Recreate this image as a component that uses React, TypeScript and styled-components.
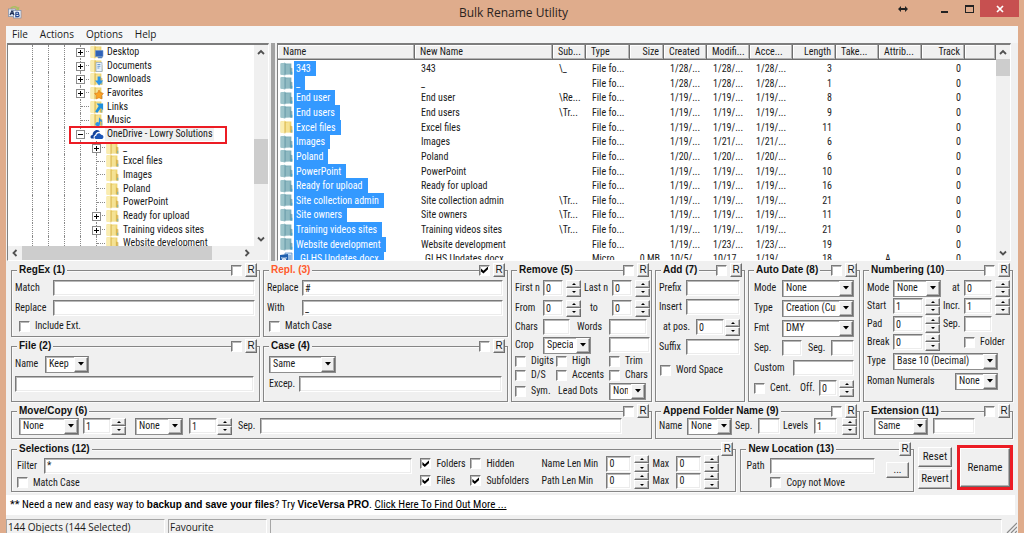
import React from "react";
import styled, { createGlobalStyle, css } from "styled-components";

const uiFont = `"Roboto Condensed", "Liberation Sans", Arial, sans-serif`;
const titleFont = `"Liberation Sans", Arial, sans-serif`;
const chromeFont = `"Open Sans", "Noto Sans", sans-serif`;
const face = "#f0f0f0";
const dark = "#808080";

const Global = createGlobalStyle`
  * { box-sizing: border-box; }
  body { margin: 0; background: #dfac8c; overflow: hidden; }
  button, input, select { font: inherit; color: inherit; margin: 0; border-radius: 0; outline: none; }
`;

const Desktop = styled.div`
  min-height: 100vh;
  display: flex;
  flex-direction: column;
  background: #dfac8c;
  font: 10px/14px ${uiFont};
  color: #1a1a1a;
  white-space: nowrap;
`;

/* ---------- title bar and menu ---------- */

const TitleBar = styled.header`
  height: 26px;
  display: grid;
  grid-template-columns: 1fr auto 1fr;
  padding: 0 5px 0 8px;
`;
const AppMark = styled.div`
  padding-top: 5px;
`;
const Title = styled.h1`
  margin: 0;
  font: 12px/25px ${chromeFont};
  color: #2b2320;
`;
const Caption = styled.div`
  display: flex;
  justify-content: flex-end;
  height: 17px;
`;
const CaptionButton = styled.button<{ $w: number; $close?: boolean }>`
  width: ${(p) => p.$w}px;
  padding: 0;
  border: 0;
  display: flex;
  align-items: center;
  justify-content: center;
  background: ${(p) => (p.$close ? "#c75050" : "transparent")};
`;

const Window = styled.main`
  flex: 1;
  margin: 0 6px;
  display: flex;
  flex-direction: column;
  background: ${face};
`;
const MenuBar = styled.nav`
  height: 17px;
  display: flex;
  gap: 12px;
  padding-left: 6px;
  background: #f5f6f7;
  font: 10px/17px ${chromeFont};
`;
const MenuItem = styled.button`
  border: 0;
  padding: 0;
  background: none;
`;

/* ---------- upper panes ---------- */

const Panes = styled.div`
  flex: 1 0 218px;
  height: 218px;
  display: flex;
  padding-right: 7px;
`;
const Pane = styled.section`
  display: flex;
  flex-direction: column;
  overflow: hidden;
  background: #fff;
  border: 1px solid #fff;
  border-top: 2px solid #7d7d7d;
  border-left-color: ${dark};
`;
const TreePane = styled(Pane)`
  width: 262px;
  flex: none;
  margin-left: 1px;
`;
const ListPane = styled(Pane)`
  flex: 1;
  min-width: 0;
  flex-direction: row;
`;
const Splitter = styled.div`
  width: 8px;
  flex: none;
  background: linear-gradient(90deg, ${face} 2px, #a2a2a2 2px, #a2a2a2 6px, ${face} 6px);
`;
const PaneRow = styled.div`
  flex: 1;
  min-height: 0;
  display: flex;
`;
const TreeView = styled.ul`
  flex: 1;
  height: 205px;
  margin: 0;
  padding: 0 0 0 24px;
  list-style: none;
  display: grid;
  grid-template-rows: repeat(15, 1fr);
`;
const TreeClip = styled.div`
  flex: 1;
  overflow: hidden;
  display: flex;
  align-items: flex-start;
`;
const TreeItem = styled.li`
  display: flex;
  min-height: 0;
`;
const Guide = styled.span`
  width: 16px;
  border-left: 1px dotted #8a8a8a;
`;
const Branch = styled.span`
  width: 10px;
  border-left: 1px dotted #8a8a8a;
  position: relative;
  display: flex;
  align-items: center;
  &::before {
    content: "";
    flex: 1;
    margin-right: 1px;
    border-top: 1px dotted #8a8a8a;
  }
`;
const Toggle = styled.button`
  position: absolute;
  left: -5px;
  top: 3px;
  width: 9px;
  height: 9px;
  padding: 0;
  border: 1px solid #8c8c8c;
  background: #fff;
  display: flex;
`;
const NodeLabel = styled.span<{ $on?: boolean }>`
  margin-left: 1px;
  padding: 0 2px;
  line-height: 14px;
  background: ${(p) => (p.$on ? "#f0f0f0" : "none")};
`;
const IconSlot = styled.span`
  width: 14px;
  display: flex;
  align-items: center;
`;
const CalloutHost = styled.span`
  display: flex;
  position: relative;
`;
const Callout = styled.span`
  position: absolute;
  z-index: 2;
  left: -11px;
  right: -13px;
  top: -1px;
  height: 18px;
  border: 2px solid #ec1c24;
  pointer-events: none;
`;

const VBar = styled.div`
  width: 14px;
  flex: none;
  background: ${face};
  display: flex;
  flex-direction: column;
`;
const HBar = styled.div`
  height: 14px;
  flex: none;
  background: ${face};
  display: flex;
`;
const ArrowButton = styled.button`
  width: 14px;
  height: 14px;
  flex: none;
  border: 0;
  padding: 0;
  background: none;
  display: flex;
  align-items: center;
  justify-content: center;
`;
const Track = styled.div<{ $n: number }>`
  flex: ${(p) => p.$n} 1 0;
`;
const Thumb = styled(Track)`
  background: #cdcdcd;
`;

const FileTable = styled.table`
  flex: 1;
  min-width: 0;
  display: flex;
  flex-direction: column;
  overflow: hidden;
  border-spacing: 0;
`;
const columns = css`
  display: grid;
  grid-template-columns: 137px 138px 33px 44px 34px repeat(7, 43px) minmax(0, 1fr);
`;
const HeadRow = styled.tr`
  ${columns}
  height: 15px;
  background: ${face};
  border-bottom: 1px solid #6e6e6e;
`;
const HeadCell = styled.th<{ $right?: boolean }>`
  padding: 0 4px 0 5px;
  font-weight: normal;
  line-height: 14px;
  text-align: ${(p) => (p.$right ? "right" : "left")};
  border-right: 1px solid #6e6e6e;
  box-shadow: inset -1px -1px 0 #b4b4b4, inset 1px 1px 0 #fff;
  overflow: hidden;
`;
const FileBody = styled.tbody`
  flex: none;
  margin-top: 1px;
  height: 205px;
  display: grid;
  grid-template-rows: repeat(14, 1fr);
`;
const FileRow = styled.tr`
  ${columns}
  min-height: 0;
`;
const FileCell = styled.td<{ $right?: boolean }>`
  padding: 0 4px 0 6px;
  line-height: 15px;
  text-align: ${(p) => (p.$right ? "right" : "left")};
  overflow: hidden;
`;
const NameCell = styled.td`
  padding: 0 0 0 2px;
  display: flex;
`;
const NameTag = styled.span`
  padding: 0 5px 0 2px;
  line-height: 15px;
  background: #3399ff;
  color: #fff;
`;

/* ---------- option groups ---------- */

const Options = styled.form`
  padding: 3px 5px;
`;
const GroupGrid = styled.div`
  display: grid;
  grid-template-columns:
    minmax(0, 249fr) minmax(0, 245fr) minmax(0, 141fr)
    minmax(0, 90fr) minmax(0, 112fr) minmax(0, 150fr);
  grid-template-rows: 73px 62px 34px;
  gap: 3px;
`;
const BottomRow = styled.div`
  display: flex;
  gap: 4px;
  margin-top: 4px;
  height: 49px;
`;
/* The rendered legend shifts a fieldset's padding box down by its own height,
   so the frame and the corner buttons are lifted back over the title line. */
const Group = styled.fieldset<{ $cols?: number; $rows?: number; $grow?: number }>`
  position: relative;
  min-width: 0;
  margin: 0;
  padding: 0;
  border: 0;
  grid-column: span ${(p) => p.$cols ?? 1};
  grid-row: span ${(p) => p.$rows ?? 1};
  flex: ${(p) => p.$grow ?? 1} 1 0;
  &::before {
    content: "";
    position: absolute;
    inset: -6px 0 0 0;
    border: 1px solid #868686;
    box-shadow: inset 1px 1px 0 #fafafa, 1px 1px 0 #fafafa;
    pointer-events: none;
  }
`;
const Legend = styled.legend<{ $hot?: boolean }>`
  position: relative;
  z-index: 1;
  margin-left: 6px;
  padding: 0 2px;
  background: ${face};
  font: bold 10px/12px ${titleFont};
  color: ${(p) => (p.$hot ? "#ff5a2b" : "#111")};
`;
const Corner = styled.div`
  position: absolute;
  z-index: 1;
  right: 3px;
  top: -13px;
  display: flex;
  gap: 3px;
  align-items: center;
  background: ${face};
`;
const raised = css`
  background: ${face};
  border: 1px solid;
  border-color: #fff #6e6e6e #6e6e6e #fff;
  box-shadow: inset -1px -1px 0 #b0b0b0;
`;
const Button = styled.button`
  ${raised}
  padding: 0;
  text-align: center;
`;
const ResetButton = styled(Button)`
  width: 12px;
  height: 14px;
  font-family: ${titleFont};
  line-height: 12px;
`;
const Body = styled.div<{ $top: number; $gap: number; $left?: number; $right?: number }>`
  position: relative;
  display: flex;
  flex-direction: column;
  gap: ${(p) => p.$gap}px;
  padding: ${(p) => p.$top}px ${(p) => p.$right ?? 5}px 0 ${(p) => p.$left ?? 4}px;
`;
const Row = styled.div<{ $h?: number; $gap?: number }>`
  height: ${(p) => p.$h ?? 16}px;
  display: flex;
  align-items: center;
  gap: ${(p) => p.$gap ?? 0}px;
`;
const Label = styled.label<{ $w?: number; $pad?: number }>`
  flex: none;
  width: ${(p) => (p.$w ? `${p.$w}px` : "auto")};
  padding-left: ${(p) => p.$pad ?? 0}px;
`;
const Input = styled.input<{ $w?: number }>`
  ${(p) => (p.$w ? `width: ${p.$w}px; flex: none;` : "width: 0; flex: 1;")}
  height: 16px;
  padding: 0 2px;
  background: #fff;
  border: 1px solid;
  border-color: #7a7a7a #fff #fff #7a7a7a;
  box-shadow: inset 1px 1px 0 #b8b8b8, inset -1px -1px 0 #ececec;
`;
const Check = styled.input.attrs({ type: "checkbox" })`
  appearance: none;
  flex: none;
  width: 11px;
  height: 11px;
  background: #fff;
  border: 1px solid;
  border-color: #7a7a7a #fff #fff #7a7a7a;
  box-shadow: inset 1px 1px 0 #b8b8b8;
  &:checked::after {
    content: "";
    display: block;
    width: 7px;
    height: 7px;
    margin: 1px;
    background: #000;
    clip-path: polygon(0 30%, 35% 60%, 100% 0, 100% 38%, 35% 100%, 0 70%);
  }
`;
const SelectBox = styled.span<{ $w?: number }>`
  position: relative;
  display: flex;
  ${(p) => (p.$w ? `width: ${p.$w}px; flex: none;` : "flex: 1;")}
`;
const NativeSelect = styled.select`
  appearance: none;
  width: 100%;
  height: 17px;
  padding: 0 17px 0 3px;
  background: #fff;
  border: 1px solid;
  border-color: #7a7a7a #8f8f8f #8f8f8f #7a7a7a;
  box-shadow: inset 1px 1px 0 #b8b8b8;
`;
const DropMark = styled.span`
  ${raised}
  position: absolute;
  right: 1px;
  top: 1px;
  bottom: 1px;
  width: 14px;
  display: flex;
  align-items: center;
  justify-content: center;
  pointer-events: none;
`;
const SpinBox = styled.span`
  flex: none;
  width: 15px;
  height: 17px;
  display: grid;
  grid-template-rows: 8px 9px;
`;
const SpinButton = styled.button`
  ${raised}
  padding: 0;
  display: flex;
  align-items: center;
  justify-content: center;
`;
const Space = styled.span<{ $w?: number }>`
  ${(p) => (p.$w ? `width: ${p.$w}px; flex: none;` : "flex: 1;")}
`;
const SelectionBody = styled.div`
  position: relative;
  display: flex;
  padding-left: 6px;
`;
const Stack = styled.div<{ $top?: number; $grow?: boolean; $w?: number }>`
  display: flex;
  flex-direction: column;
  padding-top: ${(p) => p.$top ?? 0}px;
  ${(p) => (p.$grow ? "flex: 1; min-width: 0;" : `flex: none; width: ${p.$w}px;`)}
`;
const ActionStack = styled.div`
  display: flex;
  flex-direction: column;
  gap: 2px;
  padding-top: 4px;
  width: 34px;
  flex: none;
`;
const ActionButton = styled(Button)`
  height: 20px;
  font-size: 11px;
`;
const BrowseButton = styled(Button)`
  width: 23px;
  height: 16px;
  line-height: 12px;
  margin: 7px 5px 0 11px;
`;
const RenameFrame = styled.div`
  flex: none;
  width: 56px;
  height: 45px;
  margin: 2px 0 0 1px;
  border: 3px solid #ec1c24;
  display: flex;
`;
const RenameButton = styled(Button)`
  flex: 1;
  font-size: 11px;
`;

/* ---------- promo and status ---------- */

const Promo = styled.p`
  margin: 0 3px 0 0;
  height: 20px;
  padding-left: 4px;
  font-size: 11px;
  line-height: 20px;
  background: #fff;
  color: #000;
  b { font: bold 10px/20px ${titleFont}; }
  a { color: #000; }
`;
const StatusBar = styled.footer`
  position: relative;
  display: flex;
  gap: 3px;
  height: 14px;
  margin-top: 4px;
  font: 10px/15px ${chromeFont};
`;
const StatusCell = styled.span<{ $w?: number }>`
  ${(p) => (p.$w ? `width: ${p.$w}px; flex: none;` : "flex: 1; margin-right: 16px;")}
  padding-left: 1px;
  border: 1px solid;
  border-color: #a6a6a6 #fff transparent #a6a6a6;
  border-bottom: 0;
`;
const Grip = styled.svg`
  position: absolute;
  right: 1px;
  bottom: 0;
`;

/* ---------- drawings ---------- */

type Overlay = "desktop" | "doc" | "down" | "star" | "link" | "music" | "none";

const Folder = ({ teal, overlay = "none" }: { teal?: boolean; overlay?: Overlay }) => {
  const c = teal ? ["#9cc3ca", "#7fafb9", "#6498a6", "#4da3c8"] : ["#faedb0", "#efd572", "#d3ac45", "#8fb7a0"];
  return (
    <svg width="14" height="14" viewBox="0 0 14 14" aria-hidden="true">
      <path d="M.6 1.5 L5 .8 L5.6 1.6 L11.4 1.6 L11.4 12.6 L.6 12.6Z" fill={c[1]} />
      <path d="M.6 1.5 L4.8 .8 L4.8 13.4 L.6 12.4Z" fill={c[0]} />
      <path d="M5.6 3 L9.6 2 L9.6 12 L5.6 13Z" fill={c[0]} opacity=".55" />
      <path d="M5 1.5 V13.3" stroke={c[2]} strokeWidth=".8" />
      <path d="M10 5.5 L12.4 6.2 L12.4 13 L10 12.6Z" fill={c[2]} opacity=".75" />
      <path d="M11 9.8 h1.3 v2.4 h-1.3z" fill={c[3]} />
      {overlay === "desktop" && <path d="M5.5 5.5 h7.5 v6 h-7.5z M8 12 h4 v1 h-4z" fill="#2f62b8" stroke="#6b94cf" strokeWidth=".6" />}
      {overlay === "doc" && (
        <>
          <path d="M6 3.5 h6 v9 h-6z" fill="#e8f1fa" stroke="#90a6bd" strokeWidth=".7" />
          <path d="M7.4 5.5 h3 M7.4 7.3 h3 M7.4 9 h2" stroke="#4d86c4" strokeWidth=".8" />
        </>
      )}
      {overlay === "down" && <path d="M7.6 4.5 h3 v4 h2.6 L9.1 13.4 L5 8.5 h2.6z" fill="#2c93e6" />}
      {overlay === "star" && <path d="M9 4 L10.4 7 L13.4 7.5 L11.3 9.7 L11.8 13 L9 11.4 L6.2 13 L6.7 9.7 L4.6 7.5 L7.6 7z" fill="#fba424" stroke="#dc7414" strokeWidth=".6" />}
      {overlay === "link" && <path d="M6.5 3.6 h6.6 v6.6 l-2.2 -2.2 L7.2 13 L5.2 11.6 L8.7 6z" fill="#1f8fdc" />}
      {overlay === "music" && <path d="M9 4 C9.5 6.2 12.6 6.5 12.2 9.6 C11.6 8.4 10.6 8.3 10 8.2 L10 11 A2.3 2 0 1 1 8.8 9.4z" fill="#2c93e6" />}
    </svg>
  );
};

const Cloud = () => (
  <svg width="14" height="14" viewBox="0 0 14 14" aria-hidden="true">
    <path d="M.6 10.4 C.2 8.6 1.6 7.8 2.6 7.9 C2.6 5.4 4.6 3 7 3 C8.6 3 9.6 4 10 4.8 C7 4.4 5.6 6.2 5.2 8 C3.6 8.4 3.2 10 4 11.4 H2 C1.2 11.4 .8 11 .6 10.4z" fill="#14439c" />
    <path d="M4.8 11.6 C4 9.8 5.2 8.8 6.2 8.8 C6.2 6.6 9.6 4.6 11.2 7.8 C12.8 7.8 13.6 9 13.4 10.2 C13.2 11.4 12.4 12 11.6 12 H6 C5.4 12 5 12 4.8 11.6z" fill="#1c56b8" />
  </svg>
);

const WordDoc = () => (
  <svg width="14" height="14" viewBox="0 0 14 14" aria-hidden="true">
    <path d="M5 1 h7 v12 h-7z" fill="#c7def5" stroke="#4a84c4" strokeWidth=".7" />
    <path d="M8 4 h3 M8 6 h3 M8 8 h3" stroke="#3c78be" strokeWidth=".8" />
    <path d="M0 3 L8 2 V12 L0 11z" fill="#1f5fae" />
    <path d="M1.8 5 L2.8 9 L4 5.6 L5.2 9 L6.2 5" stroke="#fff" strokeWidth=".9" fill="none" />
  </svg>
);

const AppIcon = () => (
  <svg width="14" height="14" viewBox="0 0 14 14" aria-hidden="true">
    <path d="M2 3 C4 .4 8 .2 10 2.4 L11.4 1.6 L11 5.4 L7.6 4.4 L8.8 3.4 C7 2 4.6 2.4 3.6 4z" fill="#a9bf62" />
    <rect x=".5" y="4" width="7" height="7.5" fill="#dfe7f2" stroke="#7d8ea8" strokeWidth=".7" />
    <rect x="5.5" y="5.5" width="7.5" height="7.5" fill="#eef3fa" stroke="#7d8ea8" strokeWidth=".7" />
    <path d="M2 10 L4 5.8 L6 10 M2.8 8.7 H5.2" stroke="#1d2f57" strokeWidth="1.2" fill="none" />
    <path d="M7.8 7.2 V11.6 H10 C11.6 11.6 11.6 9.4 10 9.4 H7.8 M7.8 7.2 H9.8 C11 7.2 11 9.4 9.8 9.4" stroke="#24478f" strokeWidth="1.1" fill="none" />
  </svg>
);

const chevrons = {
  up: "M1 6 L4 3 L7 6",
  down: "M1 2.5 L4 5.5 L7 2.5",
  left: "M5.5 1 L2.5 4 L5.5 7",
  right: "M2.5 1 L5.5 4 L2.5 7",
};
const Arrow = ({ dir }: { dir: keyof typeof chevrons }) => (
  <ArrowButton type="button" aria-label={`Scroll ${dir}`}>
    <svg width="8" height="8" viewBox="0 0 8 8">
      <path d={chevrons[dir]} fill="none" stroke="#505050" strokeWidth="1.8" />
    </svg>
  </ArrowButton>
);

/* ---------- small controls ---------- */

const Select = ({ id, w, value, label }: { id: string; w?: number; value: string; label?: string }) => (
  <SelectBox $w={w}>
    <NativeSelect id={id} aria-label={label}>
      <option>{value}</option>
    </NativeSelect>
    <DropMark>
      <svg width="6" height="4" viewBox="0 0 6 4">
        <path d="M0 0 H6 L3 3.5z" fill="#000" />
      </svg>
    </DropMark>
  </SelectBox>
);

const Spin = ({ label }: { label: string }) => (
  <SpinBox>
    <SpinButton type="button" aria-label={`${label} up`}>
      <svg width="4" height="2" viewBox="0 0 4 2"><path d="M2 0 L4 2 H0z" /></svg>
    </SpinButton>
    <SpinButton type="button" aria-label={`${label} down`}>
      <svg width="4" height="2" viewBox="0 0 4 2"><path d="M0 0 H4 L2 2z" /></svg>
    </SpinButton>
  </SpinBox>
);

const Tick = ({ id, text, w, on, gap = 5 }: { id: string; text: string; w?: number; on?: boolean; gap?: number }) => (
  <>
    <Check id={id} defaultChecked={on} />
    <Label htmlFor={id} $pad={gap} $w={w}>{text}</Label>
  </>
);

const GroupCorner = ({ name, on, tick = true }: { name: string; on?: boolean; tick?: boolean }) => (
  <Corner>
    {tick && <Check aria-label={`Enable ${name}`} defaultChecked={on} />}
    <ResetButton type="button" aria-label={`Reset ${name}`}>R</ResetButton>
  </Corner>
);

/* ---------- data ---------- */

type Node = { name: string; deep?: boolean; toggle?: "+" | "-"; overlay?: Overlay; drive?: boolean };
const nodes: Node[] = [
  { name: "Desktop", toggle: "+", overlay: "desktop" },
  { name: "Documents", toggle: "+", overlay: "doc" },
  { name: "Downloads", toggle: "+", overlay: "down" },
  { name: "Favorites", toggle: "+", overlay: "star" },
  { name: "Links", overlay: "link" },
  { name: "Music", overlay: "music" },
  { name: "OneDrive - Lowry Solutions", toggle: "-", drive: true },
  { name: "_", deep: true, toggle: "+" },
  { name: "Excel files", deep: true },
  { name: "Images", deep: true },
  { name: "Poland", deep: true },
  { name: "PowerPoint", deep: true },
  { name: "Ready for upload", deep: true, toggle: "+" },
  { name: "Training videos sites", deep: true, toggle: "+" },
  { name: "Website development", deep: true },
];

const headings: [string, boolean?][] = [
  ["Name"], ["New Name"], ["Sub..."], ["Type"], ["Size", true], ["Created"], ["Modifi..."],
  ["Acce..."], ["Length", true], ["Take..."], ["Attrib..."], ["Track", true], [""],
];

type FileEntry = [name: string, sub: string, created: string, modified: string, accessed: string, length: number];
const files: FileEntry[] = [
  ["343", "\\_", "1/28/...", "1/28/...", "1/28/...", 3],
  ["_", "", "1/28/...", "1/28/...", "1/28/...", 1],
  ["End user", "\\Re...", "1/19/...", "1/19/...", "1/19/...", 8],
  ["End users", "\\Tr...", "1/19/...", "1/19/...", "1/19/...", 9],
  ["Excel files", "", "1/19/...", "1/19/...", "1/19/...", 11],
  ["Images", "", "1/19/...", "1/21/...", "1/21/...", 6],
  ["Poland", "", "1/20/...", "1/20/...", "1/20/...", 6],
  ["PowerPoint", "", "1/19/...", "1/19/...", "1/19/...", 10],
  ["Ready for upload", "", "1/19/...", "1/19/...", "1/19/...", 16],
  ["Site collection admin", "\\Tr...", "1/19/...", "1/19/...", "1/19/...", 21],
  ["Site owners", "\\Tr...", "1/19/...", "1/19/...", "1/19/...", 11],
  ["Training videos sites", "\\Tr...", "1/19/...", "1/19/...", "1/19/...", 21],
  ["Website development", "", "1/19/...", "1/23/...", "1/23/...", 19],
  ["_GLHS Updates.docx", "", "10/5/...", "10/17...", "1/19/...", 18],
];

const Tree = () => (
  <TreePane aria-label="Folders">
    <PaneRow>
      <TreeClip>
        <TreeView>
          {nodes.map((n) => {
            const branch = (
              <>
                <Branch>
                  {n.toggle && (
                    <Toggle type="button" aria-label={`Toggle ${n.name}`}>
                      <svg width="7" height="7" viewBox="0 0 7 7">
                        <path d={n.toggle === "+" ? "M1 3.5 H6 M3.5 1 V6" : "M1 3.5 H6"} stroke="#000" />
                      </svg>
                    </Toggle>
                  )}
                </Branch>
                <IconSlot>{n.drive ? <Cloud /> : <Folder overlay={n.overlay} />}</IconSlot>
                <NodeLabel $on={n.drive}>{n.name}</NodeLabel>
              </>
            );
            return (
              <TreeItem key={n.name}>
                <Guide /><Guide /><Guide />
                {n.deep && <Guide />}
                {n.drive ? <CalloutHost>{branch}<Callout /></CalloutHost> : branch}
              </TreeItem>
            );
          })}
        </TreeView>
      </TreeClip>
      <VBar>
        <Arrow dir="up" /><Track $n={80} /><Thumb $n={45} /><Track $n={48} /><Arrow dir="down" />
      </VBar>
    </PaneRow>
    <HBar>
      <Arrow dir="left" /><Thumb $n={189} /><Track $n={28} /><Arrow dir="right" /><Space $w={14} />
    </HBar>
  </TreePane>
);

const FileList = () => (
  <ListPane aria-label="Files">
    <FileTable>
      <thead>
        <HeadRow>
          {headings.map(([h, right], i) => <HeadCell key={i} $right={right}>{h}</HeadCell>)}
        </HeadRow>
      </thead>
      <FileBody>
        {files.map(([name, sub, created, modified, accessed, length]) => {
          const doc = name.endsWith(".docx");
          return (
            <FileRow key={name}>
              <NameCell>
                <IconSlot>{doc ? <WordDoc /> : <Folder teal={name !== "Excel files"} />}</IconSlot>
                <NameTag>{name}</NameTag>
              </NameCell>
              <FileCell>{name}</FileCell>
              <FileCell>{sub}</FileCell>
              <FileCell>{doc ? "Micro..." : "File fo..."}</FileCell>
              <FileCell $right>{doc ? "0 MB" : ""}</FileCell>
              <FileCell>{created}</FileCell>
              <FileCell>{modified}</FileCell>
              <FileCell>{accessed}</FileCell>
              <FileCell $right>{length}</FileCell>
              <FileCell />
              <FileCell>{doc ? "A" : ""}</FileCell>
              <FileCell $right>0</FileCell>
              <FileCell />
            </FileRow>
          );
        })}
      </FileBody>
    </FileTable>
    <VBar>
      <Arrow dir="up" /><Thumb $n={17} /><Track $n={170} /><Arrow dir="down" />
    </VBar>
  </ListPane>
);

export default function App() {
  return (
    <Desktop>
      <Global />
      <TitleBar>
        <AppMark><AppIcon /></AppMark>
        <Title>Bulk Rename Utility</Title>
        <Caption>
          <CaptionButton $w={56} aria-label="Move">
            <svg width="10" height="8" viewBox="0 0 10 8"><path d="M0 4 L3 1 V3 H7 V1 L10 4 L7 7 V5 H3 V7z" fill="#222" /></svg>
          </CaptionButton>
          <CaptionButton $w={28} aria-label="Minimize">
            <svg width="8" height="10" viewBox="0 0 8 10"><path d="M0 7 H7 V9 H0z" fill="#222" /></svg>
          </CaptionButton>
          <CaptionButton $w={21} aria-label="Maximize">
            <svg width="9" height="8" viewBox="0 0 9 8"><path d="M0 0 H9 V8 H0z M1 2 V7 H8 V2z" fill="#222" fillRule="evenodd" /></svg>
          </CaptionButton>
          <CaptionButton $w={39} $close aria-label="Close">
            <svg width="8" height="8" viewBox="0 0 8 8"><path d="M1 1 L7 7 M7 1 L1 7" stroke="#fff" strokeWidth="1.7" /></svg>
          </CaptionButton>
        </Caption>
      </TitleBar>

      <Window>
        <MenuBar>
          <MenuItem>File</MenuItem>
          <MenuItem>Actions</MenuItem>
          <MenuItem>Options</MenuItem>
          <MenuItem>Help</MenuItem>
        </MenuBar>

        <Panes>
          <Tree />
          <Splitter />
          <FileList />
        </Panes>

        <Options>
          <GroupGrid>
            <Group>
              <Legend>RegEx (1)</Legend>
              <GroupCorner name="RegEx" />
              <Body $top={4} $gap={4}>
                <Row><Label $w={38} htmlFor="rx-match">Match</Label><Input id="rx-match" /></Row>
                <Row><Label $w={38} htmlFor="rx-replace">Replace</Label><Input id="rx-replace" /></Row>
                <Row $h={12}><Space $w={4} /><Tick id="rx-ext" text="Include Ext." /></Row>
              </Body>
            </Group>

            <Group>
              <Legend $hot>Repl. (3)</Legend>
              <GroupCorner name="Repl." on />
              <Body $top={4} $gap={4}>
                <Row><Label $w={35} htmlFor="rp-replace">Replace</Label><Input id="rp-replace" defaultValue="#" /></Row>
                <Row><Label $w={35} htmlFor="rp-with">With</Label><Input id="rp-with" defaultValue="_" /></Row>
                <Row $h={12}><Space $w={2} /><Tick id="rp-case" text="Match Case" /></Row>
              </Body>
            </Group>

            <Group $rows={2}>
              <Legend>Remove (5)</Legend>
              <GroupCorner name="Remove" />
              <Body $top={3} $gap={2} $right={2}>
                <Row $h={18}>
                  <Label $w={28} htmlFor="rm-first">First n</Label><Input $w={20} id="rm-first" defaultValue="0" /><Space $w={3} /><Spin label="First n" />
                  <Space /><Label $w={28} htmlFor="rm-last">Last n</Label><Input $w={20} id="rm-last" defaultValue="0" /><Space $w={3} /><Spin label="Last n" />
                </Row>
                <Row $h={18}>
                  <Label $w={28} htmlFor="rm-from">From</Label><Input $w={20} id="rm-from" defaultValue="0" /><Space $w={3} /><Spin label="From" />
                  <Space /><Label $w={22} htmlFor="rm-to">to</Label><Input $w={20} id="rm-to" defaultValue="0" /><Space $w={3} /><Spin label="To" />
                </Row>
                <Row>
                  <Label $w={28} htmlFor="rm-chars">Chars</Label><Input $w={27} id="rm-chars" />
                  <Space /><Label $w={32} htmlFor="rm-words">Words</Label><Input $w={38} id="rm-words" /><Space $w={3} />
                </Row>
                <Row>
                  <Label $w={28} htmlFor="rm-crop">Crop</Label><Select w={48} id="rm-crop" value="Special" />
                  <Space /><Input $w={41} id="rm-croptext" aria-label="Crop text" />
                </Row>
                <Row $h={12}>
                  <Tick id="rm-digits" text="Digits" w={30} /><Tick id="rm-high" text="High" w={42} /><Space /><Tick id="rm-trim" text="Trim" w={30} />
                </Row>
                <Row $h={12}>
                  <Tick id="rm-ds" text="D/S" w={30} /><Tick id="rm-acc" text="Accents" w={42} /><Space /><Tick id="rm-tchars" text="Chars" w={30} />
                </Row>
                <Row>
                  <Tick id="rm-sym" text="Sym." w={30} /><Label $pad={2} htmlFor="rm-dots">Lead Dots</Label><Space /><Select w={37} id="rm-dots" value="None" /><Space $w={4} />
                </Row>
              </Body>
            </Group>

            <Group $rows={2}>
              <Legend>Add (7)</Legend>
              <GroupCorner name="Add" />
              <Body $top={4} $gap={3}>
                <Row><Label $w={27} htmlFor="ad-prefix">Prefix</Label><Input id="ad-prefix" /></Row>
                <Row><Label $w={27} htmlFor="ad-insert">Insert</Label><Input id="ad-insert" /></Row>
                <Row $h={18}>
                  <Label $w={37} $pad={4} htmlFor="ad-pos">at pos.</Label><Input id="ad-pos" defaultValue="0" /><Space $w={1} /><Spin label="Position" />
                </Row>
                <Row><Label $w={27} htmlFor="ad-suffix">Suffix</Label><Input id="ad-suffix" /></Row>
                <Row $h={24}><Space $w={1} /><Tick id="ad-word" text="Word Space" /></Row>
              </Body>
            </Group>

            <Group $rows={2}>
              <Legend>Auto Date (8)</Legend>
              <GroupCorner name="Auto Date" />
              <Body $top={3} $gap={2} $left={6} $right={6}>
                <Row $h={18}><Label $w={28} htmlFor="dt-mode">Mode</Label><Select id="dt-mode" value="None" /></Row>
                <Row $h={18}><Label $w={28} htmlFor="dt-type">Type</Label><Select id="dt-type" value="Creation (Curr)" /></Row>
                <Row $h={18}><Label $w={28} htmlFor="dt-fmt">Fmt</Label><Select id="dt-fmt" value="DMY" /></Row>
                <Row $h={18}>
                  <Label $w={28} htmlFor="dt-sep">Sep.</Label><Input $w={20} id="dt-sep" />
                  <Label $w={29} $pad={6} htmlFor="dt-seg">Seg.</Label><Input id="dt-seg" />
                </Row>
                <Row $h={18}><Label $w={39} htmlFor="dt-custom">Custom</Label><Input id="dt-custom" /></Row>
                <Row $h={18}>
                  <Tick id="dt-cent" text="Cent." w={35} /><Label $w={19} htmlFor="dt-off">Off.</Label><Input id="dt-off" defaultValue="0" /><Space $w={2} /><Spin label="Offset" />
                </Row>
              </Body>
            </Group>

            <Group $rows={2}>
              <Legend>Numbering (10)</Legend>
              <GroupCorner name="Numbering" />
              <Body $top={3} $gap={0} $right={3}>
                <Row $h={18}>
                  <Label $w={26} htmlFor="nb-mode">Mode</Label><Select w={48} id="nb-mode" value="None" />
                  <Space /><Label $w={12} htmlFor="nb-at">at</Label><Input $w={28} id="nb-at" defaultValue="0" /><Space $w={3} /><Spin label="At" />
                </Row>
                <Row $h={18}>
                  <Label $w={26} htmlFor="nb-start">Start</Label><Input $w={30} id="nb-start" defaultValue="1" /><Space $w={2} /><Spin label="Start" />
                  <Space /><Label $w={21} htmlFor="nb-incr">Incr.</Label><Input $w={28} id="nb-incr" defaultValue="1" /><Space $w={3} /><Spin label="Increment" />
                </Row>
                <Row $h={18}>
                  <Label $w={26} htmlFor="nb-pad">Pad</Label><Input $w={30} id="nb-pad" defaultValue="0" /><Space $w={2} /><Spin label="Pad" />
                  <Space /><Label $w={21} htmlFor="nb-sep">Sep.</Label><Input $w={28} id="nb-sep" /><Space $w={18} />
                </Row>
                <Row $h={18}>
                  <Label $w={26} htmlFor="nb-break">Break</Label><Input $w={30} id="nb-break" defaultValue="0" /><Space $w={2} /><Spin label="Break" />
                  <Space /><Tick id="nb-folder" text="Folder" w={35} />
                </Row>
                <Row $h={20}><Label $w={26} htmlFor="nb-type">Type</Label><Select id="nb-type" value="Base 10 (Decimal)" /><Space $w={12} /></Row>
                <Row $h={20}><Label htmlFor="nb-roman">Roman Numerals</Label><Space /><Select w={43} id="nb-roman" value="None" /><Space $w={12} /></Row>
              </Body>
            </Group>

            <Group>
              <Legend>File (2)</Legend>
              <GroupCorner name="File" />
              <Body $top={4} $gap={4} $right={6}>
                <Row><Label $w={30} htmlFor="fl-name">Name</Label><Select w={44} id="fl-name" value="Keep" /></Row>
                <Row><Input id="fl-text" aria-label="File name" /></Row>
              </Body>
            </Group>

            <Group>
              <Legend>Case (4)</Legend>
              <GroupCorner name="Case" />
              <Body $top={4} $gap={4} $left={6} $right={6}>
                <Row><Select w={67} id="cs-mode" value="Same" label="Case mode" /></Row>
                <Row><Label $w={30} htmlFor="cs-excep">Excep.</Label><Input id="cs-excep" /></Row>
              </Body>
            </Group>

            <Group $cols={3}>
              <Legend>Move/Copy (6)</Legend>
              <GroupCorner name="Move/Copy" />
              <Body $top={1} $gap={0} $left={8} $right={30}>
                <Row>
                  <Select w={60} id="mv-a" value="None" label="Move or copy first" /><Space $w={4} /><Input $w={28} id="mv-an" aria-label="First count" defaultValue="1" /><Spin label="First count" /><Space $w={9} />
                  <Select w={48} id="mv-b" value="None" label="Move or copy second" /><Space $w={6} /><Input $w={28} id="mv-bn" aria-label="Second count" defaultValue="1" /><Spin label="Second count" />
                  <Label $w={28} $pad={6} htmlFor="mv-sep">Sep.</Label><Input id="mv-sep" />
                </Row>
              </Body>
            </Group>

            <Group $cols={2}>
              <Legend>Append Folder Name (9)</Legend>
              <GroupCorner name="Append Folder Name" />
              <Body $top={1} $gap={0} $right={3}>
                <Row>
                  <Label $w={28} htmlFor="ap-name">Name</Label><Select w={45} id="ap-name" value="None" />
                  <Label $w={26} $pad={3} htmlFor="ap-sep">Sep.</Label><Input $w={22} id="ap-sep" />
                  <Space /><Label $w={31} htmlFor="ap-levels">Levels</Label><Input $w={23} id="ap-levels" defaultValue="1" /><Space $w={5} /><Spin label="Levels" />
                </Row>
              </Body>
            </Group>

            <Group>
              <Legend>Extension (11)</Legend>
              <GroupCorner name="Extension" />
              <Body $top={1} $gap={0} $left={11}>
                <Row $gap={5}><Select w={54} id="ex-mode" value="Same" label="Extension mode" /><Input $w={42} id="ex-text" aria-label="Extension" /></Row>
              </Body>
            </Group>
          </GroupGrid>

          <BottomRow>
            <Group $grow={727}>
              <Legend>Selections (12)</Legend>
              <GroupCorner name="Selections" tick={false} />
              <SelectionBody>
                <Stack $grow $top={2}>
                  <Row $h={17}><Label $w={27} htmlFor="sl-filter">Filter</Label><Input id="sl-filter" defaultValue="*" /></Row>
                  <Row $h={17}><Tick id="sl-case" text="Match Case" /></Row>
                </Stack>
                <Space $w={8} />
                <Stack $w={50}>
                  <Row $h={17}><Tick id="sl-folders" text="Folders" on /></Row>
                  <Row $h={17}><Tick id="sl-files" text="Files" on /></Row>
                </Stack>
                <Stack $w={71}>
                  <Row $h={17}><Tick id="sl-hidden" text="Hidden" /></Row>
                  <Row $h={17}><Tick id="sl-sub" text="Subfolders" on /></Row>
                </Stack>
                <Stack $w={195}>
                  <Row $h={17}>
                    <Label $w={65} htmlFor="sl-nmin">Name Len Min</Label><Input $w={25} id="sl-nmin" defaultValue="0" /><Space $w={3} /><Spin label="Name minimum" />
                    <Label $w={27} $pad={3} htmlFor="sl-nmax">Max</Label><Input $w={25} id="sl-nmax" defaultValue="0" /><Space $w={3} /><Spin label="Name maximum" />
                  </Row>
                  <Row $h={17}>
                    <Label $w={65} htmlFor="sl-pmin">Path Len Min</Label><Input $w={25} id="sl-pmin" defaultValue="0" /><Space $w={3} /><Spin label="Path minimum" />
                    <Label $w={27} $pad={3} htmlFor="sl-pmax">Max</Label><Input $w={25} id="sl-pmax" defaultValue="0" /><Space $w={3} /><Spin label="Path maximum" />
                  </Row>
                </Stack>
              </SelectionBody>
            </Group>

            <Group $grow={174}>
              <Legend>New Location (13)</Legend>
              <GroupCorner name="New Location" tick={false} />
              <SelectionBody>
                <Stack $grow $top={2}>
                  <Row $h={17}><Label $w={24} htmlFor="nl-path">Path</Label><Input id="nl-path" /></Row>
                  <Row $h={17}><Space $w={24} /><Tick id="nl-copy" text="Copy not Move" /></Row>
                </Stack>
                <BrowseButton type="button" aria-label="Browse">...</BrowseButton>
              </SelectionBody>
            </Group>

            <ActionStack>
              <ActionButton type="button">Reset</ActionButton>
              <ActionButton type="button">Revert</ActionButton>
            </ActionStack>
            <RenameFrame><RenameButton type="button">Rename</RenameButton></RenameFrame>
          </BottomRow>
        </Options>

        <Promo>
          ** Need a new and easy way to <b>backup and save your files</b>? Try <b>ViceVersa PRO</b>.{" "}
          <a href="#more">Click Here To Find Out More ...</a>
        </Promo>
        <StatusBar>
          <StatusCell $w={159}>144 Objects (144 Selected)</StatusCell>
          <StatusCell $w={99}>Favourite</StatusCell>
          <StatusCell />
          <Grip width="11" height="11" viewBox="0 0 11 11" aria-hidden="true">
            <path d="M1 11 L11 1 M5 11 L11 5 M9 11 L11 9" stroke="#8a8a8a" strokeWidth="1.2" />
          </Grip>
        </StatusBar>
      </Window>
    </Desktop>
  );
}
